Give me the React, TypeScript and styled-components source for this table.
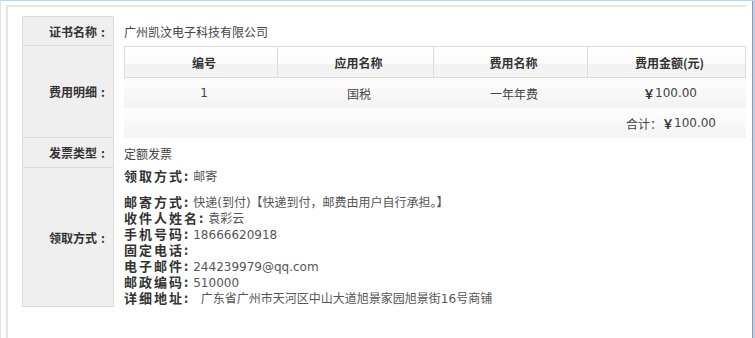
import React from "react";
import styled, { createGlobalStyle } from "styled-components";

const GlobalStyle = createGlobalStyle`
  html, body {
    margin: 0;
    padding: 0;
    background: #ffffff;
  }
  body {
    font-family: "DejaVu Sans", "Noto Sans CJK SC", sans-serif;
    font-size: 12px;
    color: #333;
  }
`;

const Frame = styled.div`
  box-sizing: border-box;
  width: 755px;
  height: 338px;
  border-top: 1px solid #b8d6f1;
  border-left: 1px solid #e2e2e2;
  border-right: 2px solid #cfcfcf;
  overflow: hidden;
  display: flex;
`;

const Viewport = styled.div`
  flex: 1;
  display: flex;
  border-right: 1px solid #6c9fe2;
  padding: 4px 0 0 5px;
`;

const Panel = styled.div`
  box-sizing: border-box;
  width: 740px;
  border-top: 2px solid #e4e4e4;
  border-left: 2px solid #e4e4e4;
  padding: 9px 0 0 14px;
`;

const InfoGrid = styled.div`
  display: grid;
  grid-template-columns: 92px 1fr;
  width: 723px;
`;

const Label = styled.div<{ $h: number; $first?: boolean }>`
  box-sizing: border-box;
  height: ${(p) => p.$h}px;
  background: #efefef;
  border: 1px solid #dcdcdc;
  border-top: ${(p) => (p.$first ? "1px solid #dcdcdc" : "none")};
  display: flex;
  align-items: center;
  justify-content: flex-end;
  padding-right: 4px;
  font-family: "Noto Sans CJK SC", sans-serif;
  font-weight: bold;
  font-size: 12px;
  color: #333;
  white-space: nowrap;
`;

/* full-width colon drawn centred in its 12px cell */
const ColonMark = styled.span`
  display: inline-block;
  width: 12px;
  text-align: center;
`;

const Value = styled.div<{ $top?: boolean }>`
  display: flex;
  align-items: ${(p) => (p.$top ? "flex-start" : "center")};
  padding-left: 10px;
  color: #444;
  font-family: "Noto Sans CJK SC", sans-serif;
  font-size: 12px;
`;

const FeeTable = styled.div`
  width: 622px;
  display: flex;
  flex-direction: column;
`;

const FeeHead = styled.div`
  box-sizing: border-box;
  height: 32px;
  display: grid;
  grid-template-columns: 153px 156px 154px 1fr;
  border: 1px solid #dcdcdc;
  background: linear-gradient(to bottom, #ffffff 0%, #fbfbfb 55%, #f1f1f1 60%, #f5f5f5 100%);
`;

const HeadCell = styled.div<{ $last?: boolean }>`
  display: flex;
  align-items: center;
  justify-content: center;
  padding-left: 6px;
  border-right: ${(p) => (p.$last ? "none" : "1px solid #dcdcdc")};
  font-family: "Noto Sans CJK SC", sans-serif;
  font-weight: bold;
  font-size: 12px;
  color: #333;
`;

const FeeRow = styled.div`
  height: 30px;
  display: grid;
  grid-template-columns: 154px 156px 154px 1fr;
  background: linear-gradient(to bottom, #fdfdfd 0%, #f7f7f7 60%, #f3f3f3 100%);
`;

const FeeCell = styled.div`
  display: flex;
  align-items: center;
  justify-content: center;
  padding-left: 6px;
  font-family: "DejaVu Sans", "Noto Sans CJK SC", sans-serif;
  font-size: 12px;
  color: #444;
`;

const Yen = styled.span`
  font-family: "Noto Sans CJK SC", sans-serif;
  font-weight: bold;
  color: #333;
`;

const TotalRow = styled.div`
  height: 30px;
  display: flex;
  align-items: center;
  justify-content: flex-end;
  padding-right: 30px;
  background: linear-gradient(to bottom, #fefefe 0%, #f8f8f8 60%, #f4f4f4 100%);
  font-family: "DejaVu Sans", "Noto Sans CJK SC", sans-serif;
  font-size: 12px;
  color: #444;
`;

const TotalCaption = styled.span`
  font-family: "Noto Sans CJK SC", sans-serif;
`;

const Delivery = styled.div`
  display: flex;
  flex-direction: column;
`;

const Line = styled.div<{ $gap?: number }>`
  height: 16px;
  line-height: 16px;
  display: flex;
  align-items: baseline;
  white-space: nowrap;
  margin-bottom: ${(p) => p.$gap ?? 0}px;
`;

const Key = styled.span`
  font-family: "Noto Sans CJK SC", sans-serif;
  font-weight: bold;
  font-size: 13px;
  letter-spacing: 2px;
  line-height: 15px;
  color: #333;
  margin-right: 3px;
`;

const Val = styled.span`
  font-family: "DejaVu Sans", "Noto Sans CJK SC", sans-serif;
  font-size: 12px;
  line-height: 15px;
  color: #555;
`;

const fees = [{ no: "1", app: "国税", name: "一年年费", amount: "100.00" }];

const contact: [string, string][] = [
  ["邮寄方式:", "快递(到付)【快递到付，邮费由用户自行承担。】"],
  ["收件人姓名:", "袁彩云"],
  ["手机号码:", "18666620918"],
  ["固定电话:", ""],
  ["电子邮件:", "244239979@qq.com"],
  ["邮政编码:", "510000"],
  ["详细地址:", "\u00a0\u00a0广东省广州市天河区中山大道旭景家园旭景街16号商铺"],
];

export default function App() {
  return (
    <>
      <GlobalStyle />
      <Frame>
        <Viewport>
          <Panel>
            <InfoGrid>
              <Label $h={30} $first>
                证书名称<ColonMark>:</ColonMark>
              </Label>
              <Value>广州凯汶电子科技有限公司</Value>

              <Label $h={92}>
                费用明细<ColonMark>:</ColonMark>
              </Label>
              <Value $top>
                <FeeTable>
                  <FeeHead>
                    <HeadCell>编号</HeadCell>
                    <HeadCell>应用名称</HeadCell>
                    <HeadCell>费用名称</HeadCell>
                    <HeadCell $last>费用金额(元)</HeadCell>
                  </FeeHead>
                  {fees.map((f) => (
                    <FeeRow key={f.no}>
                      <FeeCell>{f.no}</FeeCell>
                      <FeeCell>{f.app}</FeeCell>
                      <FeeCell>{f.name}</FeeCell>
                      <FeeCell>
                        <Yen>￥</Yen>
                        {f.amount}
                      </FeeCell>
                    </FeeRow>
                  ))}
                  <TotalRow>
                    <TotalCaption>合计：</TotalCaption>
                    <Yen>￥</Yen>100.00
                  </TotalRow>
                </FeeTable>
              </Value>

              <Label $h={30}>
                发票类型<ColonMark>:</ColonMark>
              </Label>
              <Value>定额发票</Value>

              <Label $h={139}>
                领取方式<ColonMark>:</ColonMark>
              </Label>
              <Value $top>
                <Delivery>
                  <Line $gap={10}>
                    <Key>领取方式:</Key>
                    <Val>邮寄</Val>
                  </Line>
                  {contact.map(([k, v]) => (
                    <Line key={k}>
                      <Key>{k}</Key>
                      <Val>{v}</Val>
                    </Line>
                  ))}
                </Delivery>
              </Value>
            </InfoGrid>
          </Panel>
        </Viewport>
      </Frame>
    </>
  );
}
